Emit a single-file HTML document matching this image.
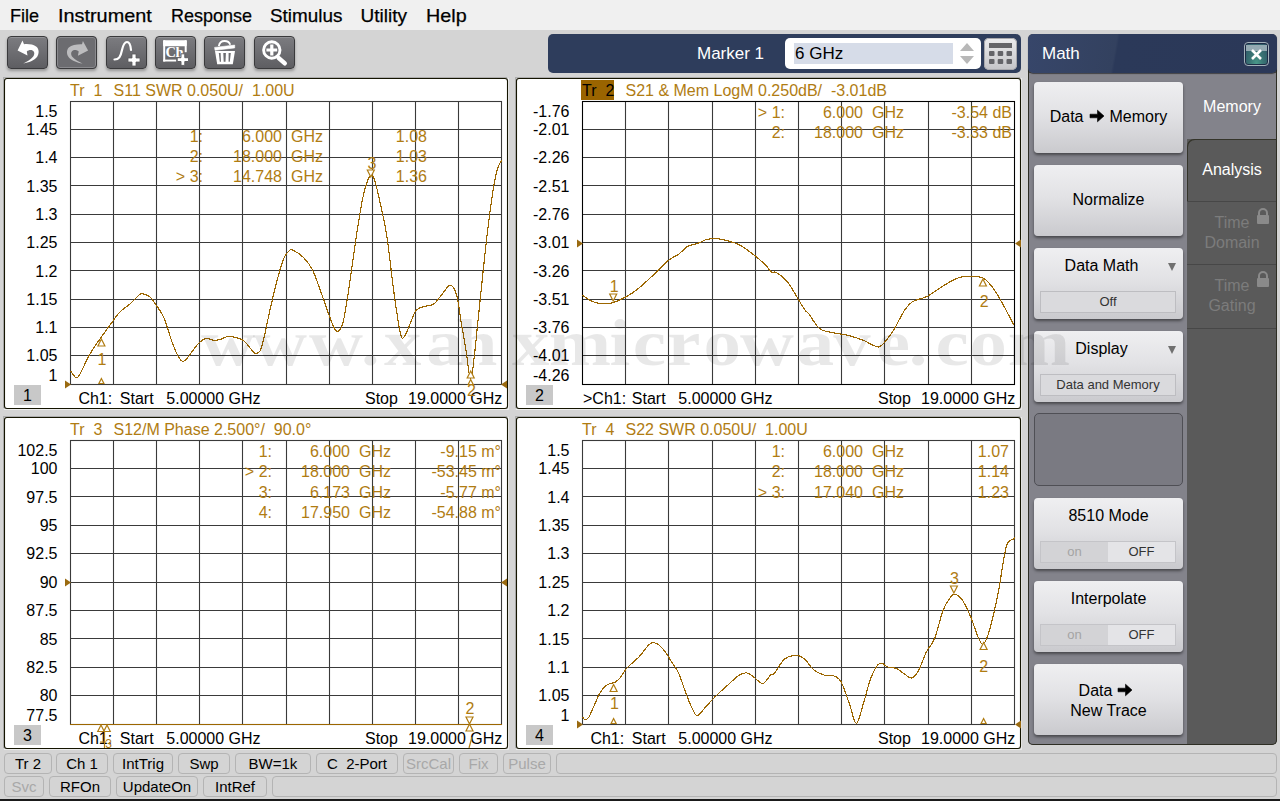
<!DOCTYPE html>
<html><head><meta charset="utf-8"><style>
html,body{margin:0;padding:0;}
body{width:1280px;height:801px;overflow:hidden;background:#d4d4d4;font-family:"Liberation Sans",sans-serif;position:relative;}
.a{position:absolute;}
svg text{font-family:"Liberation Sans",sans-serif;font-size:16px;white-space:pre;}
.or{fill:#b07c12;}
.bl{fill:#000;}
.yl{fill:#000;text-anchor:end;}
.e{text-anchor:end;}
.m{text-anchor:middle;}
.mi{position:absolute;top:5px;font-size:19px;color:#000;white-space:nowrap;transform-origin:0 0;-webkit-text-stroke:0.25px #000;}
.tb{position:absolute;top:36px;width:39px;height:31px;border:1px solid #3a3a3c;border-radius:4px;background:linear-gradient(#7c7c80,#5e5e62);box-shadow:inset 0 1px 0 rgba(255,255,255,0.18),0 2px 3px rgba(0,0,0,0.3);}
.tb.dis{background:#6c6c70;box-shadow:inset 0 0 0 1px #8a8a8e,0 2px 3px rgba(0,0,0,0.3);}
.rb{position:absolute;left:1034px;width:149px;height:71px;border-radius:4px;background:linear-gradient(#efeff1,#e2e2e5 45%,#cacace);box-shadow:0 2px 3px rgba(0,0,0,0.45);color:#000;font-size:16px;}
.rb .t{position:absolute;left:0;right:0;text-align:center;white-space:nowrap;}
.sub{position:absolute;left:6px;width:134px;height:20px;top:43px;background:#dadadd;border:1px solid #bdbdc1;font-size:13px;line-height:20px;text-align:center;color:#333;}
.tog{position:absolute;left:6px;width:134px;height:20px;top:43px;border:1px solid #c4c4c8;font-size:13px;line-height:20px;color:#333;background:linear-gradient(90deg,#d3d3d6 0,#d3d3d6 50%,#e4e4e7 50%);}
.tog span{position:absolute;top:0;width:67px;text-align:center;}
.dd{position:absolute;right:7px;top:15px;width:0;height:0;border-left:4px solid transparent;border-right:4px solid transparent;border-top:8px solid #707070;}
.sb{position:absolute;height:19px;border:1px solid #b4b4b4;border-radius:4px;background:#d4d4d4;font-size:15px;text-align:center;line-height:19px;color:#000;white-space:pre;}
.sb.d{color:#a8a8a8;}
</style></head><body>
<div class="a" style="left:0;top:0;width:1280px;height:30px;background:#f0f0f0"></div>
<div class="mi" style="left:10px;transform:scaleX(0.95)">File</div>
<div class="mi" style="left:57.5px;transform:scaleX(1.045)">Instrument</div>
<div class="mi" style="left:170.5px;transform:scaleX(0.947)">Response</div>
<div class="mi" style="left:270px;transform:scaleX(0.994)">Stimulus</div>
<div class="mi" style="left:360.5px;transform:scaleX(1.0)">Utility</div>
<div class="mi" style="left:425.5px;transform:scaleX(1.04)">Help</div>

<div class="tb" style="left:7px"></div>
<div class="tb dis" style="left:56px"></div>
<div class="tb" style="left:106px"></div>
<div class="tb" style="left:155px"></div>
<div class="tb" style="left:204px"></div>
<div class="tb" style="left:254px"></div>

<svg class="a" style="left:0;top:30px" width="300" height="46" viewBox="0 30 300 46">
<path d="M17.6 50.4L22.5 40.6L24 44.2C28 43.8 33.5 44.3 36.5 46.8C39.3 49.3 39.2 53.5 37.2 56.8C34.5 60.5 28.5 62.5 23.3 63.6C27 61.5 30.8 59.5 32.8 57C34.8 54.5 34.9 51.6 32.5 50.4C30.6 49.6 28.2 50.2 26.8 51.5L27.5 55.6Z" fill="#fff"/>
<path d="M88.1 50.4L82.9 41.1L82 44.2C77 44 71.5 45 68.8 47.5C66.3 50 66.5 54.5 68.7 57.2C71.5 60.5 77 62.5 82.5 63.6C78.5 61.5 74.5 59.5 72.5 57C70.7 54.5 70.6 51.6 73 50.4C75 49.6 77.4 50.2 78.7 51.5L77.9 55.8Z" fill="#bcbcbe"/>
<path d="M114.5 59.5C119 59.5 120.5 57 122 50C123.5 43.5 125 42 127 42C129 42 130.5 44 131 50" fill="none" stroke="#fff" stroke-width="2.2" stroke-linecap="round"/>
<path d="M132 54H136V58H140V62H136V66H132V62H128V58H132Z" fill="#fff" stroke="#5a5a5e" stroke-width="0.8"/>
<rect x="163.2" y="40.2" width="23.5" height="6" rx="1" fill="#fff"/>
<rect x="163.2" y="40.2" width="2" height="21.3" fill="#fff"/>
<rect x="163.2" y="59.6" width="13" height="1.9" fill="#fff"/>
<rect x="184.7" y="40.2" width="2" height="12" fill="#fff"/>
<text x="165.6" y="57.3" style="font-family:'Liberation Serif',serif;font-weight:bold;font-size:14.5px;fill:#fff;letter-spacing:-0.5px">Ch</text>
<path d="M181 53.8H184.8V57.7H188.6V61.5H184.8V65.4H181V61.5H177.2V57.7H181Z" fill="#fff" stroke="#5e5e62" stroke-width="1"/>
<path d="M214.6 47.4L234.7 45.1V47.9L215 50.3Z" fill="#fff" stroke="#fff" stroke-width="0.6"/>
<path d="M218.8 46.2C219.5 42.5 222 41 224.5 41C227 41 229.5 42.3 230.2 44.8" fill="none" stroke="#fff" stroke-width="1.8"/>
<path d="M215 51.1H235L232.8 64.2H217.2Z" fill="#fff"/>
<path d="M218.8 52.9L220.6 52.9L221 61.8H219.8Z M223.3 52.9H225.9L225.5 61.8H223.7Z M228.6 52.9H230.8L229.8 61.8H228.6Z" fill="#6c6c70"/>
<circle cx="271.8" cy="50" r="8.2" fill="none" stroke="#fff" stroke-width="2.9"/>
<path d="M266.4 50H277.2M271.8 44.6V55.4" stroke="#fff" stroke-width="3.2"/>
<path d="M278.5 57.8L284.8 63.4" stroke="#fff" stroke-width="4.4" stroke-linecap="round"/>
</svg>

<div class="a" style="left:548px;top:34px;width:473px;height:39px;background:#2e3d5c;border-radius:5px;"></div>
<div class="a" style="left:697px;top:44px;font-size:17px;color:#fff;">Marker 1</div>
<div class="a" style="left:785px;top:38px;width:196px;height:31px;background:#fff;border-radius:5px;"></div>
<div class="a" style="left:794px;top:43px;width:159px;height:21px;background:#d6dce8;"></div>
<div class="a" style="left:795px;top:44px;font-size:17px;color:#000;">6 GHz</div>
<svg class="a" style="left:955px;top:38px" width="26" height="31"><path d="M5 13L12 5L19 13Z" fill="#b8b8b8"/><path d="M5 18L12 26L19 18Z" fill="#b8b8b8"/></svg>
<div class="a" style="left:984px;top:38px;width:33px;height:32px;border-radius:5px;background:linear-gradient(#ececee,#c4c4c7);box-shadow:inset 0 0 0 1px #a8a8ac;"></div>
<svg class="a" style="left:984px;top:38px" width="33" height="32"><rect x="5" y="5" width="23" height="5" fill="#646468"/><rect x="5" y="13" width="5.5" height="5" rx="1" fill="#646468"/><rect x="13.7" y="13" width="5.5" height="5" rx="1" fill="#646468"/><rect x="22.5" y="13" width="5.5" height="5" rx="1" fill="#646468"/><rect x="5" y="21" width="5.5" height="5" rx="1" fill="#646468"/><rect x="13.7" y="21" width="5.5" height="5" rx="1" fill="#646468"/><rect x="22.5" y="21" width="5.5" height="5" rx="1" fill="#646468"/></svg>

<svg class="a" style="left:0;top:0" width="1280" height="801" viewBox="0 0 1280 801">
<path d="M3.5 408 V77.5 H507" fill="none" stroke="rgba(0,0,0,0.18)" stroke-width="1"/>
<path d="M4 409.5 H508.5 V78" fill="none" stroke="rgba(255,255,255,0.55)" stroke-width="1"/>
<rect x="4.5" y="78.5" width="503" height="330" rx="2.5" fill="#fff" stroke="#141400" stroke-width="1.1"/>
<path d="M113.5 101V385M70 129.5H502M156.5 101V385M70 157.5H502M199.5 101V385M70 185.5H502M242.5 101V385M70 214.5H502M286.5 101V385M70 242.5H502M329.5 101V385M70 270.5H502M372.5 101V385M70 299.5H502M415.5 101V385M70 327.5H502M458.5 101V385M70 355.5H502" stroke="#3a3a3a" stroke-width="1.1" fill="none"/>
<rect x="70.5" y="101.5" width="431" height="283" fill="none" stroke="#3a3a3a" stroke-width="1.1"/>
<text x="57.5" y="117.2" class="yl">1.5</text>
<text x="57.5" y="135.0" class="yl">1.45</text>
<text x="57.5" y="163.3" class="yl">1.4</text>
<text x="57.5" y="191.6" class="yl">1.35</text>
<text x="57.5" y="219.9" class="yl">1.3</text>
<text x="57.5" y="248.2" class="yl">1.25</text>
<text x="57.5" y="276.5" class="yl">1.2</text>
<text x="57.5" y="304.8" class="yl">1.15</text>
<text x="57.5" y="333.1" class="yl">1.1</text>
<text x="57.5" y="361.4" class="yl">1.05</text>
<text x="57.5" y="381.2" class="yl">1</text>
<text x="70" y="95.7" class="or">Tr  1</text>
<text x="113.5" y="95.7" class="or">S11 SWR 0.050U/  1.00U</text>
<text x="203" y="141.7" class="or e">1:</text>
<text x="282" y="141.7" class="or e">6.000</text>
<text x="291" y="141.7" class="or">GHz</text>
<text x="427" y="141.7" class="or e">1.08</text>
<text x="203" y="161.9" class="or e">2:</text>
<text x="282" y="161.9" class="or e">18.000</text>
<text x="291" y="161.9" class="or">GHz</text>
<text x="427" y="161.9" class="or e">1.03</text>
<text x="203" y="182.1" class="or e">&gt; 3:</text>
<text x="282" y="182.1" class="or e">14.748</text>
<text x="291" y="182.1" class="or">GHz</text>
<text x="427" y="182.1" class="or e">1.36</text>
<rect x="14" y="385" width="27" height="20" fill="#c8c8c8"/>
<text x="27.5" y="401" class="bl m">1</text>
<text x="78.4" y="403.8" class="bl">Ch1:</text>
<text x="119.8" y="403.8" class="bl">Start</text>
<text x="166.3" y="403.8" class="bl">5.00000 GHz</text>
<text x="365" y="403.8" class="bl">Stop</text>
<text x="408" y="403.8" class="bl">19.0000 GHz</text>
<path d="M515.5 408 V77.5 H1020" fill="none" stroke="rgba(0,0,0,0.18)" stroke-width="1"/>
<path d="M516 409.5 H1021.5 V78" fill="none" stroke="rgba(255,255,255,0.55)" stroke-width="1"/>
<rect x="516.5" y="78.5" width="504" height="330" rx="2.5" fill="#fff" stroke="#141400" stroke-width="1.1"/>
<path d="M625.5 101V385M582 129.5H1015M668.5 101V385M582 157.5H1015M712.5 101V385M582 185.5H1015M755.5 101V385M582 214.5H1015M798.5 101V385M582 242.5H1015M841.5 101V385M582 270.5H1015M884.5 101V385M582 299.5H1015M928.5 101V385M582 327.5H1015M971.5 101V385M582 355.5H1015" stroke="#3a3a3a" stroke-width="1.1" fill="none"/>
<rect x="582.5" y="101.5" width="432" height="283" fill="none" stroke="#000" stroke-width="1.1"/>
<text x="569.5" y="117.2" class="yl">-1.76</text>
<text x="569.5" y="135.0" class="yl">-2.01</text>
<text x="569.5" y="163.3" class="yl">-2.26</text>
<text x="569.5" y="191.6" class="yl">-2.51</text>
<text x="569.5" y="219.9" class="yl">-2.76</text>
<text x="569.5" y="248.2" class="yl">-3.01</text>
<text x="569.5" y="276.5" class="yl">-3.26</text>
<text x="569.5" y="304.8" class="yl">-3.51</text>
<text x="569.5" y="333.1" class="yl">-3.76</text>
<text x="569.5" y="361.4" class="yl">-4.01</text>
<text x="569.5" y="381.2" class="yl">-4.26</text>
<rect x="581" y="80" width="33" height="20" fill="#9a6400"/>
<text x="582" y="95.7" class="bl">Tr  2</text>
<text x="625.5" y="95.7" class="or">S21 &amp; Mem LogM 0.250dB/  -3.01dB</text>
<text x="785" y="118.2" class="or e">&gt; 1:</text>
<text x="863" y="118.2" class="or e">6.000</text>
<text x="872" y="118.2" class="or">GHz</text>
<text x="1012" y="118.2" class="or e">-3.54 dB</text>
<text x="785" y="138.4" class="or e">2:</text>
<text x="863" y="138.4" class="or e">18.000</text>
<text x="872" y="138.4" class="or">GHz</text>
<text x="1012" y="138.4" class="or e">-3.33 dB</text>
<rect x="526" y="385" width="27" height="20" fill="#c8c8c8"/>
<text x="539.5" y="401" class="bl m">2</text>
<text x="583" y="403.8" class="bl">&gt;Ch1:</text>
<text x="631.8" y="403.8" class="bl">Start</text>
<text x="678.3" y="403.8" class="bl">5.00000 GHz</text>
<text x="878" y="403.8" class="bl">Stop</text>
<text x="921" y="403.8" class="bl">19.0000 GHz</text>
<path d="M3.5 748 V416.5 H507" fill="none" stroke="rgba(0,0,0,0.18)" stroke-width="1"/>
<path d="M4 749.5 H508.5 V417" fill="none" stroke="rgba(255,255,255,0.55)" stroke-width="1"/>
<rect x="4.5" y="417.5" width="503" height="331" rx="2.5" fill="#fff" stroke="#141400" stroke-width="1.1"/>
<path d="M113.5 440V725M70 468.5H502M156.5 440V725M70 496.5H502M199.5 440V725M70 525.5H502M242.5 440V725M70 553.5H502M286.5 440V725M70 582.5H502M329.5 440V725M70 610.5H502M372.5 440V725M70 638.5H502M415.5 440V725M70 667.5H502M458.5 440V725M70 695.5H502" stroke="#3a3a3a" stroke-width="1.1" fill="none"/>
<rect x="70.5" y="440.5" width="431" height="284" fill="none" stroke="#3a3a3a" stroke-width="1.1"/>
<text x="57.5" y="456.2" class="yl">102.5</text>
<text x="57.5" y="474.1" class="yl">100</text>
<text x="57.5" y="502.5" class="yl">97.5</text>
<text x="57.5" y="530.9" class="yl">95</text>
<text x="57.5" y="559.3" class="yl">92.5</text>
<text x="57.5" y="587.7" class="yl">90</text>
<text x="57.5" y="616.1" class="yl">87.5</text>
<text x="57.5" y="644.5" class="yl">85</text>
<text x="57.5" y="672.9" class="yl">82.5</text>
<text x="57.5" y="701.3" class="yl">80</text>
<text x="57.5" y="721.2" class="yl">77.5</text>
<text x="70" y="434.7" class="or">Tr  3</text>
<text x="113.5" y="434.7" class="or">S12/M Phase 2.500°/  90.0°</text>
<text x="272" y="457.2" class="or e">1:</text>
<text x="350" y="457.2" class="or e">6.000</text>
<text x="359" y="457.2" class="or">GHz</text>
<text x="501" y="457.2" class="or e">-9.15 m°</text>
<text x="272" y="477.4" class="or e">&gt; 2:</text>
<text x="350" y="477.4" class="or e">18.000</text>
<text x="359" y="477.4" class="or">GHz</text>
<text x="501" y="477.4" class="or e">-53.45 m°</text>
<text x="272" y="497.6" class="or e">3:</text>
<text x="350" y="497.6" class="or e">6.173</text>
<text x="359" y="497.6" class="or">GHz</text>
<text x="501" y="497.6" class="or e">-5.77 m°</text>
<text x="272" y="517.8" class="or e">4:</text>
<text x="350" y="517.8" class="or e">17.950</text>
<text x="359" y="517.8" class="or">GHz</text>
<text x="501" y="517.8" class="or e">-54.88 m°</text>
<rect x="14" y="725" width="27" height="20" fill="#c8c8c8"/>
<text x="27.5" y="741" class="bl m">3</text>
<text x="78.4" y="743.8" class="bl">Ch1:</text>
<text x="119.8" y="743.8" class="bl">Start</text>
<text x="166.3" y="743.8" class="bl">5.00000 GHz</text>
<text x="365" y="743.8" class="bl">Stop</text>
<text x="408" y="743.8" class="bl">19.0000 GHz</text>
<path d="M515.5 748 V416.5 H1020" fill="none" stroke="rgba(0,0,0,0.18)" stroke-width="1"/>
<path d="M516 749.5 H1021.5 V417" fill="none" stroke="rgba(255,255,255,0.55)" stroke-width="1"/>
<rect x="516.5" y="417.5" width="504" height="331" rx="2.5" fill="#fff" stroke="#141400" stroke-width="1.1"/>
<path d="M625.5 440V725M582 468.5H1015M668.5 440V725M582 496.5H1015M712.5 440V725M582 525.5H1015M755.5 440V725M582 553.5H1015M798.5 440V725M582 582.5H1015M841.5 440V725M582 610.5H1015M884.5 440V725M582 638.5H1015M928.5 440V725M582 667.5H1015M971.5 440V725M582 695.5H1015" stroke="#3a3a3a" stroke-width="1.1" fill="none"/>
<rect x="582.5" y="440.5" width="432" height="284" fill="none" stroke="#3a3a3a" stroke-width="1.1"/>
<text x="569.5" y="456.2" class="yl">1.5</text>
<text x="569.5" y="474.1" class="yl">1.45</text>
<text x="569.5" y="502.5" class="yl">1.4</text>
<text x="569.5" y="530.9" class="yl">1.35</text>
<text x="569.5" y="559.3" class="yl">1.3</text>
<text x="569.5" y="587.7" class="yl">1.25</text>
<text x="569.5" y="616.1" class="yl">1.2</text>
<text x="569.5" y="644.5" class="yl">1.15</text>
<text x="569.5" y="672.9" class="yl">1.1</text>
<text x="569.5" y="701.3" class="yl">1.05</text>
<text x="569.5" y="721.2" class="yl">1</text>
<text x="582" y="434.7" class="or">Tr  4</text>
<text x="625.5" y="434.7" class="or">S22 SWR 0.050U/  1.00U</text>
<text x="785" y="457.2" class="or e">1:</text>
<text x="863" y="457.2" class="or e">6.000</text>
<text x="872" y="457.2" class="or">GHz</text>
<text x="1009" y="457.2" class="or e">1.07</text>
<text x="785" y="477.4" class="or e">2:</text>
<text x="863" y="477.4" class="or e">18.000</text>
<text x="872" y="477.4" class="or">GHz</text>
<text x="1009" y="477.4" class="or e">1.14</text>
<text x="785" y="497.6" class="or e">&gt; 3:</text>
<text x="863" y="497.6" class="or e">17.040</text>
<text x="872" y="497.6" class="or">GHz</text>
<text x="1009" y="497.6" class="or e">1.23</text>
<rect x="526" y="725" width="27" height="20" fill="#c8c8c8"/>
<text x="539.5" y="741" class="bl m">4</text>
<text x="590.4" y="743.8" class="bl">Ch1:</text>
<text x="631.8" y="743.8" class="bl">Start</text>
<text x="678.3" y="743.8" class="bl">5.00000 GHz</text>
<text x="878" y="743.8" class="bl">Stop</text>
<text x="921" y="743.8" class="bl">19.0000 GHz</text>
<path d="M70.4 370.9C71.4 372.1 74.3 377.0 76.0 377.5C77.7 378.0 77.5 378.1 80.0 373.9C82.5 369.7 86.4 360.2 90.0 353.9C93.6 347.6 95.9 344.8 100.0 338.9C104.1 333.0 109.4 325.8 113.0 320.9C116.6 316.0 116.9 315.0 120.0 311.9C123.1 308.8 126.4 307.1 130.0 303.9C133.6 300.7 137.5 296.0 140.0 294.3C142.5 292.6 142.2 293.8 144.0 294.3C145.8 294.8 147.8 295.0 150.0 296.9C152.2 298.8 153.5 301.1 156.0 304.9C158.5 308.7 161.1 311.2 164.0 317.9C166.9 324.6 169.5 335.1 172.0 341.9C174.5 348.7 176.0 352.4 178.0 355.9C180.0 359.4 181.0 361.5 183.0 361.5C185.0 361.5 186.3 359.1 189.0 355.9C191.7 352.7 194.9 347.0 198.0 343.9C201.1 340.8 203.1 339.1 206.0 338.5C208.9 337.9 211.5 340.1 214.0 340.3C216.5 340.5 217.5 340.2 220.0 339.5C222.5 338.8 225.1 336.9 228.0 336.5C230.9 336.1 233.1 336.7 236.0 337.5C238.9 338.3 241.5 339.0 244.0 340.9C246.5 342.8 248.0 345.7 250.0 347.9C252.0 350.1 253.2 352.8 255.0 353.3C256.8 353.8 258.4 353.7 260.0 350.9C261.6 348.1 262.2 345.3 264.0 337.9C265.8 330.5 267.5 320.9 270.0 309.9C272.5 298.9 275.5 286.3 278.0 277.0C280.5 267.7 281.8 262.9 284.0 258.0C286.2 253.1 288.4 251.4 290.0 250.0C291.6 248.6 290.7 249.1 293.0 250.3C295.3 251.5 299.2 253.3 302.7 256.8C306.2 260.3 308.9 262.7 312.4 269.7C315.9 276.7 319.0 286.9 322.2 295.7C325.4 304.5 327.7 312.0 330.3 318.4C332.9 324.8 334.5 330.8 336.8 331.4C339.1 332.0 340.9 330.4 343.2 321.6C345.5 312.8 347.4 297.9 349.7 282.7C352.0 267.5 353.9 252.5 356.2 237.3C358.5 222.1 360.4 209.2 362.7 198.4C365.0 187.6 367.1 180.8 369.2 177.3C371.3 173.8 372.0 173.9 374.1 178.9C376.2 183.9 378.3 194.4 380.6 204.9C382.9 215.4 384.7 222.1 387.0 237.3C389.3 252.5 391.2 272.3 393.5 289.2C395.8 306.1 398.1 322.8 400.0 331.4C401.9 340.0 402.2 338.4 403.9 337.2C405.6 336.0 407.5 329.7 409.7 324.9C411.9 320.1 413.3 313.7 416.2 310.3C419.1 306.9 422.8 307.3 426.0 306.1C429.2 304.9 431.2 306.0 434.1 303.8C437.0 301.6 439.3 297.4 442.2 294.1C445.1 290.8 447.7 285.0 450.3 285.3C452.9 285.6 454.8 288.6 456.8 295.7C458.8 302.8 459.9 315.1 461.6 324.9C463.3 334.7 464.4 340.3 466.0 350.0C467.6 359.7 469.0 379.0 470.6 379.0C472.2 379.0 473.7 360.3 475.0 350.0C476.3 339.7 475.6 343.1 477.9 321.6C480.2 300.1 484.4 257.1 487.6 230.8C490.8 204.5 493.1 188.5 495.7 175.7C498.3 162.9 501.0 162.4 502.2 159.5" fill="none" stroke="#9c6600" stroke-width="1.15" stroke-linejoin="round" shape-rendering="crispEdges"/>
<path d="M582.4 295.3C583.8 296.2 587.0 298.8 589.9 300.2C592.8 301.6 594.5 302.7 598.3 303.2C602.1 303.7 606.1 304.4 611.1 303.2C616.1 302.0 620.9 299.5 625.9 296.8C630.9 294.1 633.0 293.0 638.7 288.3C644.4 283.6 652.4 275.9 657.7 270.9C663.0 265.9 664.6 263.4 668.4 260.3C672.2 257.2 675.6 256.4 679.0 253.9C682.4 251.4 684.1 248.4 687.5 246.5C690.9 244.6 694.7 244.6 698.1 243.3C701.5 242.0 703.2 240.3 706.6 239.5C710.0 238.7 713.4 238.5 717.2 238.7C721.0 238.9 723.6 239.6 727.8 240.8C732.0 242.0 735.5 242.7 740.5 245.5C745.5 248.3 750.8 252.5 755.4 256.1C760.0 259.7 763.1 262.7 766.0 265.6C768.9 268.5 769.4 270.7 771.3 272.0C773.2 273.3 773.7 270.9 776.6 272.6C779.5 274.3 783.4 276.8 787.2 281.5C791.0 286.2 794.6 293.3 797.8 298.5C801.0 303.7 803.1 307.5 805.0 310.2C806.9 312.9 806.0 310.2 808.5 313.4C811.0 316.6 815.3 324.9 819.1 328.2C822.9 331.5 824.4 330.7 829.7 332.0C835.0 333.3 842.7 334.1 848.8 335.6C854.9 337.1 858.9 338.6 863.7 340.5C868.5 342.4 872.1 345.4 875.3 346.2C878.5 347.0 878.4 348.1 881.7 345.2C885.0 342.3 889.4 336.4 893.4 330.3C897.4 324.2 900.6 316.3 904.0 311.2C907.4 306.1 908.3 304.4 912.5 301.7C916.7 299.0 922.3 298.9 927.3 296.4C932.2 293.9 934.7 291.2 940.0 287.9C945.3 284.6 951.7 280.4 957.0 278.3C962.3 276.2 965.7 276.5 969.7 276.2C973.7 275.9 976.2 276.1 979.3 276.9C982.4 277.7 983.5 277.4 986.7 280.5C989.9 283.6 992.4 286.3 997.3 294.3C1002.2 302.3 1010.9 319.5 1013.9 325.0" fill="none" stroke="#9c6600" stroke-width="1.15" stroke-linejoin="round" shape-rendering="crispEdges"/>
<path d="M582.6 716.9C583.0 717.4 583.8 719.9 585.0 719.9C586.2 719.9 587.4 719.4 589.0 716.9C590.6 714.4 592.0 710.2 594.0 705.9C596.0 701.6 597.7 696.7 600.0 692.9C602.3 689.1 604.3 686.8 607.0 684.9C609.7 683.0 612.7 683.6 615.0 682.3C617.3 681.0 617.8 680.5 620.0 677.9C622.2 675.3 623.6 671.7 627.0 667.9C630.4 664.1 635.1 661.0 639.0 656.9C642.9 652.8 646.0 647.4 648.9 644.9C651.8 642.4 652.4 642.2 654.9 642.9C657.4 643.6 659.7 645.1 662.9 648.9C666.1 652.7 670.0 659.4 672.9 663.9C675.8 668.4 676.4 668.1 678.9 673.9C681.4 679.7 684.4 689.4 686.9 695.9C689.4 702.4 691.0 706.4 692.9 709.9C694.8 713.4 695.1 715.9 697.3 715.5C699.5 715.1 701.7 711.2 704.9 707.9C708.1 704.6 710.9 700.9 714.9 696.9C718.9 692.9 722.6 689.8 726.9 685.9C731.2 682.0 735.2 677.8 738.8 675.5C742.4 673.2 743.9 672.5 746.8 672.9C749.7 673.3 751.9 676.0 754.8 677.9C757.7 679.8 759.9 684.0 762.8 683.5C765.7 683.0 768.6 676.8 770.8 674.9C773.0 673.0 772.3 675.8 774.8 672.9C777.3 670.0 780.7 662.0 784.8 658.9C788.9 655.8 794.1 655.3 797.8 655.5C801.5 655.7 802.6 657.5 805.5 660.1C808.4 662.7 810.2 667.1 813.7 669.8C817.2 672.5 821.0 674.2 824.7 675.3C828.4 676.4 831.3 674.9 834.3 676.1C837.3 677.3 838.5 677.1 841.2 682.1C843.9 687.1 846.8 696.7 849.5 704.1C852.2 711.5 853.8 723.4 856.3 723.4C858.8 723.4 860.5 712.5 863.2 704.1C865.9 695.7 868.4 683.9 871.4 676.6C874.4 669.3 876.7 665.1 879.7 663.4C882.7 661.7 884.9 666.1 887.9 667.0C890.9 667.9 893.2 667.2 896.2 668.4C899.2 669.6 901.7 672.2 904.4 673.9C907.1 675.6 908.8 678.5 911.3 678.0C913.8 677.5 915.5 675.8 918.2 671.1C920.9 666.4 923.4 657.8 926.4 651.9C929.4 646.0 931.7 645.6 934.7 638.2C937.7 630.8 940.2 617.9 942.9 610.7C945.6 603.5 947.7 601.3 949.8 598.3C951.9 595.3 952.2 593.9 954.4 594.2C956.6 594.5 959.2 595.7 962.1 599.7C965.0 603.7 967.4 609.3 970.4 616.2C973.4 623.1 976.2 633.2 978.6 638.2C981.0 643.2 981.6 645.2 983.6 643.7C985.6 642.2 987.0 638.8 989.6 629.9C992.2 621.0 994.9 609.0 997.9 594.2C1000.9 579.4 1003.4 557.4 1006.1 547.5C1008.8 537.6 1011.4 540.9 1013.0 539.2C1014.6 537.5 1014.6 538.2 1015.0 538.0" fill="none" stroke="#9c6600" stroke-width="1.15" stroke-linejoin="round" shape-rendering="crispEdges"/>
<path d="M70 724.5H502" stroke="#9c6600" stroke-width="1"/>
<path d="M469 748L472 737" stroke="#b07c12" stroke-width="1.2"/>
<path d="M101.4 339L97.9 346H104.9Z" fill="#fff" stroke="#b07c12" stroke-width="1.2"/>
<text x="102" y="364.5" class="or m">1</text>
<path d="M101.4 378.5L98.9 383.5H103.9Z" fill="#fff" stroke="#b07c12" stroke-width="1.2"/>
<path d="M370.8 177L367.3 170H374.3Z" fill="#fff" stroke="#b07c12" stroke-width="1.2"/>
<text x="372" y="169" class="or m">3</text>
<path d="M470.7 371L467.2 378H474.2Z" fill="#fff" stroke="#b07c12" stroke-width="1.2"/>
<path d="M470.7 379.5L468.2 384.5H473.2Z" fill="#fff" stroke="#b07c12" stroke-width="1.2"/>
<text x="471.4" y="396" class="or m">2</text>
<path d="M613.2 301L609.7 294H616.7Z" fill="#fff" stroke="#b07c12" stroke-width="1.2"/>
<text x="614.3" y="292" class="or m">1</text>
<path d="M982.9 279L979.4 286H986.4Z" fill="#fff" stroke="#b07c12" stroke-width="1.2"/>
<text x="984.2" y="306.5" class="or m">2</text>
<path d="M469.5 724L466.0 717H473.0Z" fill="#fff" stroke="#b07c12" stroke-width="1.2"/>
<path d="M469.5 724L466.0 731H473.0Z" fill="#fff" stroke="#b07c12" stroke-width="1.2"/>
<text x="470" y="714" class="or m">2</text>
<path d="M101 725L97.75 731.5H104.25Z" fill="#fff" stroke="#b07c12" stroke-width="1.2"/>
<path d="M107 725L103.75 731.5H110.25Z" fill="#fff" stroke="#b07c12" stroke-width="1.2"/>
<path d="M104.5 731V748M100 742H106" stroke="#b07c12" stroke-width="1.2"/>
<text x="108.5" y="748" class="or m" style="font-size:12px">3</text>
<path d="M613.6 684.5L610.1 691.5H617.1Z" fill="#fff" stroke="#b07c12" stroke-width="1.2"/>
<text x="614.4" y="709" class="or m">1</text>
<path d="M613.6 718.5L611.1 723.5H616.1Z" fill="#fff" stroke="#b07c12" stroke-width="1.2"/>
<path d="M953.9 593L950.4 586H957.4Z" fill="#fff" stroke="#b07c12" stroke-width="1.2"/>
<text x="954.4" y="583.5" class="or m">3</text>
<path d="M983.6 642.5L980.1 649.5H987.1Z" fill="#fff" stroke="#b07c12" stroke-width="1.2"/>
<text x="983.6" y="671.5" class="or m">2</text>
<path d="M983.6 718.5L981.1 723.5H986.1Z" fill="#fff" stroke="#b07c12" stroke-width="1.2"/>
<path d="M71 384.5L65 380.5V388.5Z" fill="#9a6a10"/>
<path d="M501 384.5L507 380.5V388.5Z" fill="#9a6a10"/>
<path d="M583 243.5L577 239.5V247.5Z" fill="#9a6a10"/>
<path d="M1015 243.5L1021 239.5V247.5Z" fill="#9a6a10"/>
<path d="M71 582.5L65 578.5V586.5Z" fill="#9a6a10"/>
<path d="M501 582.5L507 578.5V586.5Z" fill="#9a6a10"/>
<path d="M583 724.5L577 720.5V728.5Z" fill="#9a6a10"/>
<path d="M1015 724.5L1021 720.5V728.5Z" fill="#9a6a10"/>
</svg>

<!-- right panel -->
<div class="a" style="left:1028px;top:34px;width:249px;height:711px;border-radius:5px;background:#5a5a5a;"></div>
<div class="a" style="left:1028px;top:73px;width:159px;height:672px;border-radius:0 0 0 5px;background:#83838b;"></div>
<div class="a" style="left:1187px;top:73px;width:90px;height:66px;background:#83838b;"></div>
<div class="a" style="left:1187px;top:139px;width:90px;height:62px;background:#5a5a5a;border-radius:7px 0 0 0;box-shadow:inset 1px 1px 0 #34342a;"></div>
<div class="a" style="left:1187px;top:201px;width:90px;height:1px;background:#474747;"></div>
<div class="a" style="left:1187px;top:264px;width:90px;height:1px;background:#474747;"></div>
<div class="a" style="left:1187px;top:328px;width:90px;height:1px;background:#474747;"></div>
<div class="a" style="left:1028px;top:60px;width:247px;height:684px;border:1px solid #2e2e24;border-top:none;border-radius:0 0 5px 5px;"></div>
<div class="a" style="left:1187px;width:90px;text-align:center;top:98px;font-size:16px;color:#fff;">Memory</div>
<div class="a" style="left:1187px;width:90px;text-align:center;top:161px;font-size:16px;color:#fff;">Analysis</div>
<div class="a" style="left:1187px;top:213px;width:90px;text-align:center;font-size:16px;line-height:20px;color:#7c7c7c;">Time<br>Domain</div>
<div class="a" style="left:1187px;top:276px;width:90px;text-align:center;font-size:16px;line-height:20px;color:#7c7c7c;">Time<br>Gating</div>
<svg class="a" style="left:1255px;top:207px" width="16" height="18"><path d="M4 8V6A4 4 0 0 1 12 6V8" fill="none" stroke="#8a8a8a" stroke-width="2"/><rect x="2" y="8" width="12" height="9" rx="1" fill="#8a8a8a"/></svg>
<svg class="a" style="left:1255px;top:270px" width="16" height="18"><path d="M4 8V6A4 4 0 0 1 12 6V8" fill="none" stroke="#8a8a8a" stroke-width="2"/><rect x="2" y="8" width="12" height="9" rx="1" fill="#8a8a8a"/></svg>
<div class="a" style="left:1028px;top:34px;width:249px;height:39px;border-radius:5px;background:linear-gradient(100deg,#37466a 0,#33415f 35%,#2b3959 36%,#2b3858);box-shadow:0 1px 1px rgba(0,0,0,0.5);"></div>
<div class="a" style="left:1042px;top:44px;font-size:17px;color:#fff;">Math</div>
<div class="a" style="left:1244px;top:42px;width:23px;height:22px;border-radius:4px;border:1px solid #a4b2ba;background:#1e2c46;"></div>
<div class="a" style="left:1246px;top:44px;width:21px;height:20px;border-radius:2px;background:radial-gradient(ellipse at 50% 100%,#4a9a8a 0,#3a7474 45%,#2c5566 100%);"></div>
<div class="a" style="left:1246px;top:45px;width:21px;height:6px;background:#94aab2;"></div>
<svg class="a" style="left:1246px;top:44px" width="21" height="20"><path d="M6 6L15 15M15 6L6 15" stroke="#fff" stroke-width="2.6"/></svg>

<div class="rb" style="top:82px;"><div class="t" style="top:26px">Data<svg width="16" height="14" viewBox="0 0 16 14" style="vertical-align:-1px;margin:0 5px"><path d="M1 5.2H8.5V1.2L15 7L8.5 12.8V8.8H1Z" fill="#000" stroke="#000" stroke-width="0.6" stroke-linejoin="round"/></svg>Memory</div></div>
<div class="rb" style="top:165px;"><div class="t" style="top:26px">Normalize</div></div>
<div class="rb" style="top:248px;"><div class="t" style="top:9px;left:-14px">Data Math</div><div class="dd"></div><div class="sub">Off</div></div>
<div class="rb" style="top:331px;"><div class="t" style="top:9px;left:-14px">Display</div><div class="dd"></div><div class="sub">Data and Memory</div></div>
<div class="a" style="left:1034px;top:413px;width:147px;height:71px;border-radius:5px;border:1px solid #4f4f55;background:#7a7a82;"></div>
<div class="rb" style="top:498px;"><div class="t" style="top:9px">8510 Mode</div><div class="tog"><span style="left:0;color:#a4a4a4">on</span><span style="left:67px">OFF</span></div></div>
<div class="rb" style="top:581px;"><div class="t" style="top:9px">Interpolate</div><div class="tog"><span style="left:0;color:#a4a4a4">on</span><span style="left:67px">OFF</span></div></div>
<div class="rb" style="top:664px;"><div class="t" style="top:17px;line-height:20px">Data<svg width="16" height="14" viewBox="0 0 16 14" style="vertical-align:-1px;margin:0 5px"><path d="M1 5.2H8.5V1.2L15 7L8.5 12.8V8.8H1Z" fill="#000" stroke="#000" stroke-width="0.6" stroke-linejoin="round"/></svg><br>New Trace</div></div>

<!-- watermark -->
<svg class="a" style="left:0;top:0;pointer-events:none" width="1280" height="801"><text transform="scale(1.1,0.95)" x="182.7 230.0 280.9 328.1 349.1 387.6 414.4 465.5 498.9 554.0 575.3 606.7 639.5 672.7 724.4 757.6 797.1 826.1 850.4 881.3 916.2" y="384.2" style="font-family:'Liberation Serif',serif;font-weight:bold;font-size:68px;fill:rgba(0,0,0,0.09)">www.xahxmicrowave.com</text></svg>

<div class="sb" style="left:4px;top:753px;width:46px;">Tr 2</div>
<div class="sb" style="left:56px;top:753px;width:50px;">Ch 1</div>
<div class="sb" style="left:113px;top:753px;width:58px;">IntTrig</div>
<div class="sb" style="left:178px;top:753px;width:50px;">Swp</div>
<div class="sb" style="left:235px;top:753px;width:74px;">BW=1k</div>
<div class="sb" style="left:316px;top:753px;width:80px;">C  2-Port</div>
<div class="sb d" style="left:403px;top:753px;width:49px;">SrcCal</div>
<div class="sb d" style="left:459px;top:753px;width:37px;">Fix</div>
<div class="sb d" style="left:503px;top:753px;width:46px;">Pulse</div>
<div class="sb" style="left:556px;top:753px;width:719px;"></div>
<div class="sb d" style="left:4px;top:776px;width:38px;">Svc</div>
<div class="sb" style="left:49px;top:776px;width:60px;">RFOn</div>
<div class="sb" style="left:116px;top:776px;width:80px;">UpdateOn</div>
<div class="sb" style="left:203px;top:776px;width:62px;">IntRef</div>
<div class="sb" style="left:272px;top:776px;width:1003px;"></div>
<div class="a" style="left:0;top:799px;width:1280px;height:2px;background:#1a1a1a;"></div>
</body></html>
